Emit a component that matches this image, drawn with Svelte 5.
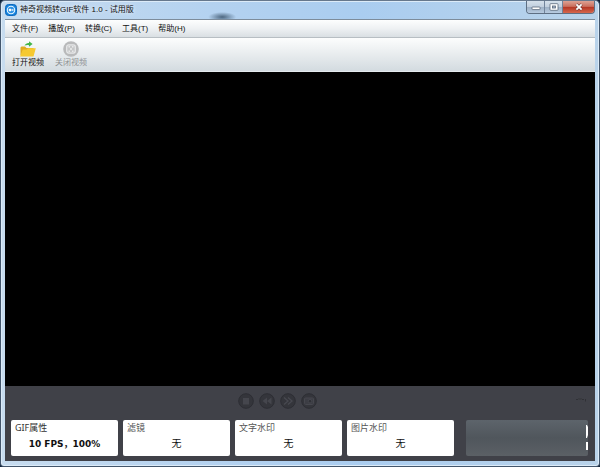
<script lang="ts">
  interface MenuItem {
    label: string;
    key: string;
  }

  interface Option {
    title: string;
    value: string;
    strong?: boolean;
  }

  const menus: MenuItem[] = [
    { label: '文件', key: 'F' },
    { label: '播放', key: 'P' },
    { label: '转换', key: 'C' },
    { label: '工具', key: 'T' },
    { label: '帮助', key: 'H' },
  ];

  const options: Option[] = [
    { title: 'GIF属性', value: '10 FPS，100%', strong: true },
    { title: '滤镜', value: '无' },
    { title: '文字水印', value: '无' },
    { title: '图片水印', value: '无' },
  ];

  const controls = [
    { label: 'Stop', icon: 'stop' },
    { label: 'Rewind', icon: 'rewind' },
    { label: 'Forward', icon: 'forward' },
    { label: 'Snapshot', icon: 'camera' },
  ];

  let selected = $state<string | null>(null);
</script>

<div class="window">
  <header class="titlebar">
    <svg class="logo" viewBox="0 0 12 12" aria-hidden="true">
      <rect x="0.5" y="0.5" width="11" height="11" rx="3" fill="#1683dc" stroke="#0c68bd" />
      <circle cx="6" cy="6" r="3.7" fill="#2a91e4" stroke="#e9f6ff" stroke-width="1.1" />
      <rect x="3.8" y="4.8" width="2.6" height="2.4" rx="0.6" fill="#fff" />
      <path d="M6.6 6 L8.3 4.8 V7.2 Z" fill="#fff" />
    </svg>
    <h1>神奇视频转GIF软件 1.0 - 试用版</h1>
    <div class="window-buttons">
      <button class="win-btn" aria-label="Minimize">
        <svg width="10" height="8" viewBox="0 0 10 8">
          <rect x="1" y="4" width="8" height="2.6" rx="0.6" fill="#fff" stroke="#59677a" stroke-width="0.8" />
        </svg>
      </button>
      <button class="win-btn" aria-label="Maximize">
        <svg width="10" height="8" viewBox="0 0 10 8">
          <rect x="1" y="0.7" width="8" height="6.6" rx="0.8" fill="#fff" stroke="#59677a" stroke-width="0.8" />
          <rect x="3.5" y="3" width="3" height="2" fill="#a9bacd" stroke="#59677a" stroke-width="0.8" />
        </svg>
      </button>
      <button class="win-btn close" aria-label="Close">
        <svg width="10" height="8" viewBox="0 0 10 8">
          <path d="M2.4 1.3 L7.6 6.7 M7.6 1.3 L2.4 6.7" stroke="#6d3b3b" stroke-width="3" />
          <path d="M2.4 1.3 L7.6 6.7 M7.6 1.3 L2.4 6.7" stroke="#fff" stroke-width="1.8" />
        </svg>
      </button>
    </div>
  </header>

  <div class="client">
    <nav class="menubar">
      {#each menus as menu (menu.key)}
        <button>{menu.label}({menu.key})</button>
      {/each}
    </nav>

    <div class="toolbar">
      <button class="tool">
        <svg width="18" height="16" viewBox="0 0 18 16" aria-hidden="true">
          <path d="M1.5 6.5 L2.5 5.5 H6 L7.5 7 H14.5 V14 H1.5 Z" fill="#e0ab22" />
          <path d="M1 15.5 L3.8 8.6 H7.5 L9 7.2 H16.8 L14.5 15.5 Z" fill="#f6c931" />
          <path d="M5.5 4.6 C6.5 2.4 8.6 1.7 10 2 V0.2 L13.6 3 L10 5.8 V4.2 C8.3 3.7 7.2 4 5.5 4.6 Z" fill="#43b649" />
        </svg>
        打开视频
      </button>
      <button class="tool" disabled>
        <svg width="18" height="16" viewBox="0 0 18 16" aria-hidden="true">
          <circle cx="9" cy="8" r="7.8" fill="#b9babb" />
          <rect x="4.7" y="3.9" width="8.6" height="8.2" rx="2" fill="#c6c7c8" stroke="#e8e9ea" stroke-width="1.2" />
          <path d="M6.6 5.8 H7.8 M10.2 5.8 H11.4 M6.6 10.2 H7.8 M10.2 10.2 H11.4 M8.1 8 H9.9" stroke="#f1f2f2" stroke-width="1.6" />
        </svg>
        关闭视频
      </button>
    </div>

    <main class="video"></main>

    <footer class="panel">
      <div class="controls">
        <div class="playback">
          {#each controls as control (control.icon)}
            <button aria-label={control.label} disabled>
              <svg width="16" height="16" viewBox="0 0 16 16">
                <circle cx="8" cy="8" r="7.3" fill="#34353b" stroke="#2d2e34" />
                {#if control.icon === 'stop'}
                  <rect x="5" y="5" width="6" height="6.5" fill="#45464d" />
                {:else if control.icon === 'rewind'}
                  <path d="M8 4.5 V11.5 L3.5 8 Z M12.5 4.5 V11.5 L8 8 Z" fill="#45464d" />
                {:else if control.icon === 'forward'}
                  <path d="M4 4.5 L8 8 L4 11.5 M8 4.5 L12 8 L8 11.5" fill="none" stroke="#484950" stroke-width="1.3" />
                {:else}
                  <rect x="3.5" y="5" width="9" height="6.5" rx="1" fill="#3c3d44" stroke="#46474e" />
                  <circle cx="9" cy="8.2" r="1.8" fill="#303137" stroke="#484950" stroke-width="0.8" />
                {/if}
              </svg>
            </button>
          {/each}
        </div>
        <svg class="handle" width="10" height="5" viewBox="0 0 10 5" aria-hidden="true">
          <path d="M0 2.5 H2 L3 1.5 L4 2.5 L5 1.5 L6 2.5 H8 M9.5 2 V4.5" fill="none" stroke="#303136" />
        </svg>
      </div>

      <div class="options">
        {#each options as option (option.title)}
          <button class="card" aria-pressed={selected === option.title} onclick={() => (selected = option.title)}>
            <span class="title" class:dark={option.strong}>{option.title}</span>
            <span class="value" class:strong={option.strong}>{option.value}</span>
          </button>
        {/each}
        <button class="export" aria-label="Convert" disabled>
          <svg width="2" height="26" viewBox="0 0 2 26">
            <path d="M0 0 H1 L2 2 V10 L1 13 H0 Z M0 17 H2 V25 H0 Z" fill="#fff" />
          </svg>
        </button>
      </div>
    </footer>
  </div>
</div>

<style>
  :global(body) {
    margin: 0;
    background: #10233a;
  }
  .window {
    box-sizing: border-box;
    min-height: 100vh;
    display: flex;
    flex-direction: column;
    padding: 0 4px 5px;
    border: 1px solid #43566c;
    border-top-color: #66788d;
    border-radius: 5px 5px 4px 4px;
    background:
      radial-gradient(ellipse 14px 5px at 37% 16px, #4d6780, transparent),
      linear-gradient(90deg, #c7dcef, #b4d2f0 35%, #aacdf0 60%, #b9d3ea);
    box-shadow: inset 0 0 0 1px #dcebf8;
    font-family: "Liberation Sans", "Noto Sans CJK SC", sans-serif;
    font-size: 8px;
    line-height: 12px;
    color: #111;
  }
  button {
    margin: 0;
    padding: 0;
    border: 0;
    background: none;
    font: inherit;
    color: inherit;
  }
  svg {
    display: block;
  }
  .titlebar {
    display: flex;
    align-items: center;
    height: 18px;
  }
  .logo {
    width: 12px;
    height: 12px;
    margin-right: 3px;
  }
  h1 {
    flex: 1;
    margin: 0;
    font-size: 8px;
    font-weight: 400;
    text-shadow: 0 0 4px #fff;
  }
  .window-buttons {
    display: flex;
    align-self: flex-start;
    border: 1px solid #5e6f83;
    border-top: 0;
    border-radius: 0 0 4px 4px;
    overflow: hidden;
  }
  .win-btn {
    display: flex;
    align-items: center;
    justify-content: center;
    width: 18px;
    height: 12px;
    border-right: 1px solid #71839a;
    background: linear-gradient(#d5e0eb, #c1cfde 48%, #9eb1c6 52%, #b7cbe0);
  }
  .win-btn.close {
    width: 31px;
    border-right: 0;
    background: linear-gradient(#dda294, #cb705f 45%, #b53725 52%, #d5674d);
  }
  .client {
    flex: 1;
    display: flex;
    flex-direction: column;
    border-top: 1px solid #7d8c9b;
  }
  .menubar {
    display: flex;
    gap: 10px;
    padding: 3px 7px 2px;
    background: linear-gradient(#fdfefe, #eef1f3 50%, #d9dfe3);
    border-bottom: 1px solid #b7bec3;
  }
  .toolbar {
    display: flex;
    gap: 11px;
    padding: 3px 7px 2px;
    background: linear-gradient(#fcfdfd, #e8ecee 50%, #d3dbe0);
    border-bottom: 1px solid #e4eaed;
  }
  .tool {
    display: flex;
    flex-direction: column;
    align-items: center;
  }
  .tool:disabled {
    color: #8f9294;
  }
  .video {
    flex: 1;
    background: #000;
  }
  .panel {
    padding: 7px 7px 5px 6px;
    background: #404148;
  }
  .controls {
    position: relative;
    display: flex;
    justify-content: center;
    margin-bottom: 11px;
  }
  .playback {
    display: flex;
    gap: 5px;
    margin-right: 45px;
  }
  .handle {
    position: absolute;
    right: 2px;
    top: 4px;
  }
  .options {
    display: grid;
    grid-template-columns: repeat(4, 107fr) 129fr;
    gap: 5px;
  }
  .card {
    min-width: 0;
    display: flex;
    flex-direction: column;
    padding: 2px 4px;
    border-radius: 2px;
    background: #fff;
    text-align: left;
  }
  .title {
    font-family: "DejaVu Sans", "Noto Sans CJK SC", sans-serif;
    font-size: 9px;
    color: #555;
  }
  .title.dark {
    font-family: "Noto Sans", "Noto Sans CJK SC", sans-serif;
    color: #333;
  }
  .value {
    align-self: center;
    padding: 4px 0;
    font-size: 10px;
  }
  .value.strong {
    font-family: "DejaVu Sans", "Noto Sans CJK SC", sans-serif;
    font-size: 9px;
    font-weight: 700;
  }
  .export {
    display: flex;
    align-items: center;
    justify-content: flex-end;
    margin-left: 7px;
    border-radius: 2px;
    background: linear-gradient(#5d646b, #50565c 50%, #5b6065);
  }
</style>
